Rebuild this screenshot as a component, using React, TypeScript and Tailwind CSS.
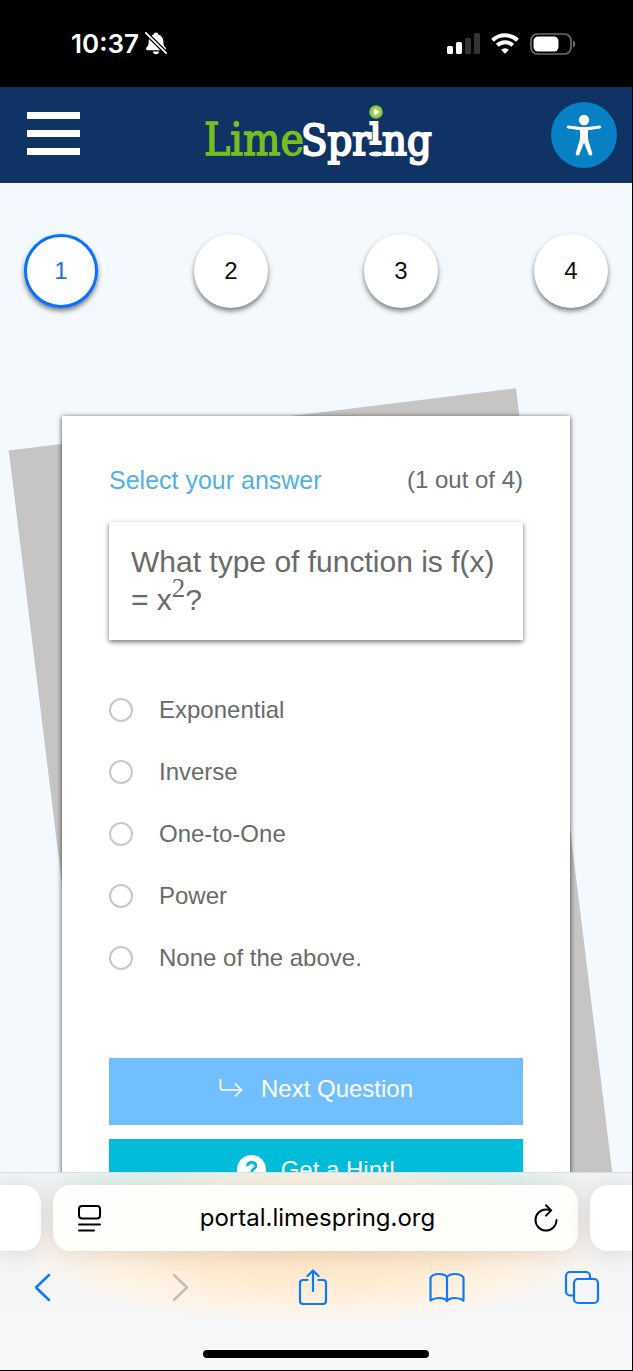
import { useState } from "react";

const STEPS = [1, 2, 3, 4];
const ANSWERS = ["Exponential", "Inverse", "One-to-One", "Power", "None of the above."];

function StatusBar() {
  return (
    <div className="flex h-[87px] shrink-0 items-center justify-between bg-black pr-14 pl-[71px] text-white">
      <div className="flex items-center gap-1.5">
        <span className="text-[26px] leading-8 font-semibold">10:37</span>
        <svg className="h-[23px] w-[22px]" viewBox="0 0 22 23" aria-hidden="true">
          <path
            d="M11 .5c1.3 0 2.2.8 2.4 1.9 3 1 4.900 3.400 4.900 6.600 0 4 .8 5.200 2.200 6.600 1 .8.6 2.600-1 2.600H2.500c-1.600 0-2-1.700-1-2.600C2.900 14.200 3.700 13 3.700 9c0-3.200 1.900-5.700 4.900-6.600C8.800 1.300 9.700.5 11 .5ZM7.800 19.500h6.400c-.3 1.700-1.500 2.700-3.200 2.700s-2.900-1-3.200-2.700Z"
            fill="#fff"
          />
          <path d="M.8.800 21.200 21.200" stroke="#000" strokeWidth="4.200" />
          <path d="M.8.800 21.200 21.200" stroke="#fff" strokeWidth="1.700" strokeLinecap="round" />
        </svg>
      </div>
      <div className="flex items-center gap-[11px]">
        <svg className="h-[21px] w-[33px]" viewBox="0 0 33 21" aria-hidden="true">
          <rect x="0" y="13" width="6" height="8" rx="1.500" fill="#fff" />
          <rect x="9" y="9" width="6" height="12" rx="1.500" fill="#fff" />
          <rect x="18" y="5" width="6" height="16" rx="1.500" fill="#333" />
          <rect x="27" y="0" width="6" height="21" rx="1.500" fill="#333" />
        </svg>
        <svg className="h-[21px] w-[28px]" viewBox="0 0 28 21" aria-hidden="true" fill="none" stroke="#fff" strokeWidth="4">
          <path d="M1.500 7.300a18 18 0 0 1 25 0" />
          <path d="M6.300 12.300a11.200 11.200 0 0 1 15.400 0" />
          <path d="M14 20.800l-4-4.100a6 6 0 0 1 8 0Z" fill="#fff" stroke="none" />
        </svg>
        <svg className="h-[22px] w-[46px]" viewBox="0 0 46 22" aria-hidden="true">
          <rect x="1" y="1" width="40" height="20" rx="6.500" fill="none" stroke="#6b6b6b" strokeWidth="1.700" />
          <rect x="3.500" y="3.500" width="25" height="15" rx="4.500" fill="#fff" />
          <path d="M43 7.500c3 1 3 6 0 7Z" fill="#6b6b6b" />
        </svg>
      </div>
    </div>
  );
}

function Logo() {
  return (
    <svg
      className="h-16 w-[236px] font-['DejaVu_Serif_Condensed','DejaVu_Serif',serif]"
      viewBox="0 0 236 64"
      role="img"
      aria-label="LimeSpring"
    >
      <defs>
        <radialGradient id="ball">
          <stop offset="0" stopColor="#c9e89b" />
          <stop offset="1" stopColor="#7cbf2b" />
        </radialGradient>
      </defs>
      <text x="6" y="52" fontSize="44" fill="#78be20" stroke="#78be20" strokeWidth="1.300">Lime</text>
      <g fontSize="43" fill="#fff" stroke="#fff" strokeWidth="2">
        <text x="103" y="52">Spr</text>
        <text x="171" y="41">ı</text>
        <text x="184" y="52">ng</text>
      </g>
      <ellipse cx="178" cy="51" rx="7" ry="2.400" fill="#fff" />
      <circle cx="178" cy="9" r="6.800" fill="url(#ball)" />
      <path d="M176 5.500v7l5.500-3.500Z" fill="#fff" />
    </svg>
  );
}

function Header() {
  return (
    <header className="grid h-24 shrink-0 grid-cols-[1fr_auto_1fr] items-center bg-[#0f3364] px-[15px]">
      <button type="button" aria-label="Menu" className="mb-1 ml-3 flex w-[53px] flex-col gap-[11px]">
        <span className="h-[7px] w-full bg-white" />
        <span className="h-[7px] w-full bg-white" />
        <span className="h-[7px] w-full bg-white" />
      </button>
      <Logo />
      <button
        type="button"
        aria-label="Accessibility options"
        className="flex size-[66px] items-center justify-center justify-self-end rounded-full bg-[#0781c4]"
      >
        <svg className="h-[42px] w-[36px]" viewBox="0 0 36 42" aria-hidden="true">
          <circle cx="18" cy="6" r="5.200" fill="#fff" />
          <path
            d="M2.500 11.500 15 13h6l12.500-1.500c1.900-.2 2.300 2.600.4 2.900l-11.900 1.900v8.700l4.300 14.500c.5 2-2.800 3-3.600 1L18 28.500l-4.700 12c-.8 2-4 1-3.600-1L14 25v-8.700L2.100 14.400c-1.900-.3-1.500-3.100.4-2.900Z"
            fill="#fff"
          />
        </svg>
      </button>
    </header>
  );
}

function Steps() {
  return (
    <nav aria-label="Questions" className="flex justify-between px-6 pt-[51px]">
      {STEPS.map((n) => (
        <button
          key={n}
          type="button"
          className={
            n === 1
              ? "size-[74px] rounded-full border-[3px] border-[#0573ff] bg-white text-2xl text-[#1c73e8] shadow-[0_3px_5px_rgba(0,0,0,0.5)]"
              : "size-[74px] rounded-full bg-white text-2xl text-[#111] shadow-[0_3px_5px_rgba(0,0,0,0.5)]"
          }
        >
          {n}
        </button>
      ))}
    </nav>
  );
}

function QuestionCard() {
  const [choice, setChoice] = useState("");
  return (
    <div className="relative isolate mx-[62px] mt-[108px]">
      <div className="absolute inset-y-0 -right-[3px] left-0 -z-10 -rotate-7 bg-[#c6c4c5]" />
      <section className="bg-white px-[47px] pt-12 pb-[115px] text-2xl text-[#6a6a6a] shadow-[0_1px_5px_rgba(0,0,0,0.75)]">
        <div className="flex items-center justify-between leading-8">
          <h1 className="text-[25px] text-[#52b1e0]">Select your answer</h1>
          <span>(1 out of 4)</span>
        </div>
        <p className="mt-[26px] bg-white px-[22px] py-[21px] text-[30px] leading-[38px] shadow-[0_2px_5px_rgba(0,0,0,0.55)]">
          What type of function is f(x) = x
          <sup className="font-['Liberation_Serif',serif] text-[27px] leading-none">2</sup>?
        </p>
        <fieldset aria-label="Answers" className="mt-[54px] flex flex-col gap-[30px]">
          {ANSWERS.map((a) => (
            <label key={a} className="flex items-center gap-[26px] leading-8">
              <input
                type="radio"
                name="answer"
                checked={choice === a}
                onChange={() => setChoice(a)}
                className="size-6 appearance-none rounded-full border-2 border-[#c8c8c8] bg-white checked:border-8 checked:border-[#0573ff]"
              />
              {a}
            </label>
          ))}
        </fieldset>
        <div className="mt-[84px] flex flex-col gap-3.5 text-white">
          <button type="button" className="flex h-[67px] items-center justify-center gap-[18px] bg-[#72bfff] pb-1.5">
            <svg className="h-5 w-6" viewBox="0 0 24 20" aria-hidden="true" fill="none" stroke="#fff" strokeWidth="1.700" strokeLinecap="round" strokeLinejoin="round">
              <path d="M1.500 0v8.500A2.500 2.500 0 0 0 4 11h18M16.500 5l6 6-6 6" />
            </svg>
            Next Question
          </button>
          <button type="button" className="flex h-[67px] items-center justify-center gap-[15px] bg-[#00bcd8] pb-1.5">
            <svg className="size-[29px]" viewBox="0 0 30 30" aria-hidden="true">
              <circle cx="15" cy="15" r="15" fill="#fff" />
              <path d="M10.700 11.500c.3-2.500 2-3.800 4.400-3.800 2.600 0 4.400 1.400 4.400 3.600 0 3.200-4.200 3-4.200 6.200" fill="none" stroke="#00bcd8" strokeWidth="3" />
              <circle cx="15.300" cy="22" r="2" fill="#00bcd8" />
            </svg>
            Get a Hint!
          </button>
        </div>
      </section>
    </div>
  );
}

function BrowserBar() {
  return (
    <footer className="flex shrink-0 flex-col overflow-hidden border-t border-[#d9dfdf] bg-[radial-gradient(ellipse_48%_42%_at_50%_36%,#ffe4c2_0%,#ffebd3_50%,#fff3e5_75%,transparent_100%),linear-gradient(90deg,transparent_8%,#d9f3ef_25%,#d9f3ef_75%,transparent_92%),linear-gradient(#f1f3f4,#f8f8fa)] bg-[length:100%_100%,100%_24px,100%_100%] bg-no-repeat">
      <div className="flex gap-3 py-3">
        <div className="h-[66px] w-[41px] rounded-r-[18px] bg-white shadow-[0_2px_24px_rgba(0,0,0,0.12)]" />
        <div className="flex h-[66px] flex-1 items-center justify-between rounded-[18px] bg-[#fefefb] pr-4 pl-5 text-black shadow-[0_2px_24px_rgba(0,0,0,0.12)]">
          <button type="button" aria-label="Page menu" className="p-1">
            <svg className="h-7 w-6" viewBox="0 0 24 28" aria-hidden="true" fill="none" stroke="currentColor" strokeWidth="2" strokeLinecap="round">
              <rect x="2" y="2" width="21" height="12.500" rx="3" />
              <path d="M2 20.500h21M2 26.500h15" />
            </svg>
          </button>
          <span className="text-2xl">portal.limespring.org</span>
          <button type="button" aria-label="Reload" className="p-1">
            <svg className="h-7 w-6" viewBox="0 0 24 28" aria-hidden="true" fill="none" stroke="currentColor" strokeWidth="2" strokeLinecap="round" strokeLinejoin="round">
              <path d="M22.500 16a10.500 10.500 0 1 1-10.500-10.500c1.800 0 3.200.3 4.600 1M12 1.200l5.200 5.200-5.200 5.200" />
            </svg>
          </button>
        </div>
        <div className="h-[66px] w-[42px] rounded-l-[18px] bg-white shadow-[0_2px_24px_rgba(0,0,0,0.12)]" />
      </div>
      <div className="flex items-center justify-between pr-8 pl-6 text-[#0a7aff]">
        <button type="button" aria-label="Back" className="flex w-9 justify-center">
          <svg className="h-12 w-9" viewBox="0 0 36 48" aria-hidden="true" fill="none" stroke="currentColor" strokeWidth="2.500" strokeLinecap="round" strokeLinejoin="round">
            <path d="M25 12 12 24.500 25 37" />
          </svg>
        </button>
        <button type="button" aria-label="Forward" className="flex w-9 justify-center text-[#c5bdb6]">
          <svg className="h-12 w-9" viewBox="0 0 36 48" aria-hidden="true" fill="none" stroke="currentColor" strokeWidth="2.500" strokeLinecap="round" strokeLinejoin="round">
            <path d="m15 12 13 12.500L15 37" />
          </svg>
        </button>
        <button type="button" aria-label="Share" className="flex w-9 justify-center">
          <svg className="h-12 w-9" viewBox="0 0 36 48" aria-hidden="true" fill="none" stroke="currentColor" strokeWidth="2.200" strokeLinecap="round" strokeLinejoin="round">
            <path d="M13.500 17H9a3 3 0 0 0-3 3v18a3 3 0 0 0 3 3h20a3 3 0 0 0 3-3V20a3 3 0 0 0-3-3h-4.500M19 28V8M13.500 13 19 7.500l5.500 5.500" />
          </svg>
        </button>
        <button type="button" aria-label="Bookmarks" className="flex w-9 justify-center">
          <svg className="h-12 w-9" viewBox="0 0 36 48" aria-hidden="true" fill="none" stroke="currentColor" strokeWidth="2.200" strokeLinecap="round" strokeLinejoin="round">
            <path d="M18 14c-1.500-2-4.500-3-8-3-4 0-7 1.300-8.500 3.500V37.500c2-1.500 5-2.500 8.500-2.500 3.500 0 6.500 1 8 3 1.500-2 4.500-3 8-3s6.500 1 8.500 2.500V14.500C33 12.300 30 11 26 11c-3.500 0-6.500 1-8 3ZM18 14v23.500" />
          </svg>
        </button>
        <button type="button" aria-label="Tabs" className="flex w-9 justify-center">
          <svg className="h-12 w-9" viewBox="0 0 36 48" aria-hidden="true" fill="none" stroke="currentColor" strokeWidth="2.200" strokeLinecap="round" strokeLinejoin="round">
            <rect x="10" y="16" width="24" height="24" rx="4" />
            <path d="M10 32.500H6a4 4 0 0 1-4-4V13a4 4 0 0 1 4-4h16a4 4 0 0 1 4 4v3" />
          </svg>
        </button>
      </div>
      <div className="mx-auto mt-[39px] mb-3 h-2 w-[226px] rounded-full bg-black" />
    </footer>
  );
}

export default function App() {
  return (
    <div className="flex h-screen flex-col border-r border-b border-black bg-[#f4f9fd] font-[Inter,sans-serif]">
      <StatusBar />
      <Header />
      <main className="min-h-0 flex-1 overflow-hidden font-['Liberation_Sans',Arial,sans-serif]">
        <Steps />
        <QuestionCard />
      </main>
      <BrowserBar />
    </div>
  );
}
